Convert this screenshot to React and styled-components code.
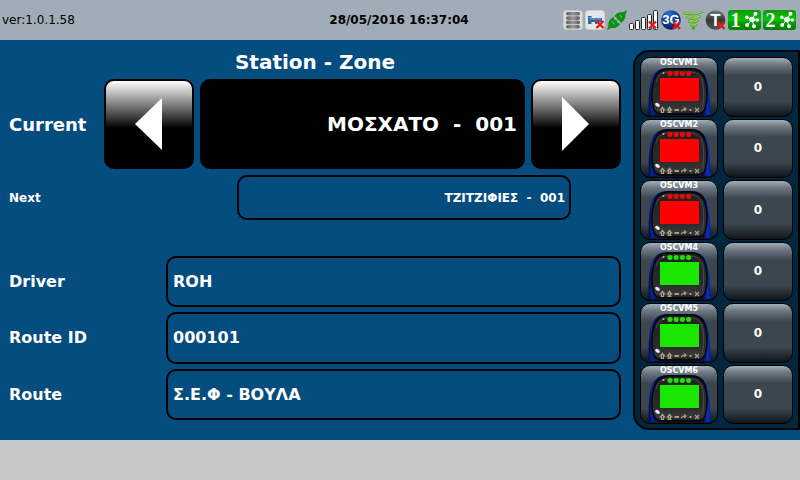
import React from 'react';
import styled, { createGlobalStyle } from 'styled-components';

const GlobalStyle = createGlobalStyle`
  *, *::before, *::after { box-sizing: border-box; }
  body {
    margin: 0;
    background: #c8c8c8;
    font-family: "DejaVu Sans", Verdana, sans-serif;
  }
  button, input { font: inherit; color: inherit; margin: 0; }
`;

const Screen = styled.div`
  display: flex;
  flex-direction: column;
  min-height: 100vh;
`;

const StatusBar = styled.header`
  display: grid;
  grid-template-columns: 1fr auto 1fr;
  align-items: center;
  height: 40px;
  padding: 0 4px 0 2px;
  background: #a0adb9;
  color: #000;
  font-size: 12px;
`;

const Clock = styled.time`
  font-weight: bold;
`;

const Indicators = styled.div`
  display: flex;
  justify-content: flex-end;
  gap: 2px;

  svg { display: block; flex: none; }
`;

const Main = styled.main`
  flex: 1;
  display: flex;
  gap: 12px;
  padding: 10px 0 10px 9px;
  margin-bottom: 40px;
  background: #054c7f;
  color: #fff;
  font-weight: bold;
`;

const TripPanel = styled.section`
  flex: 1;
  min-width: 0;
  display: flex;
  flex-direction: column;
  padding-bottom: 10px;
`;

const Title = styled.h1`
  margin: 0 0 5px;
  font-size: 20px;
  line-height: 24px;
  text-align: center;
`;

const StationRow = styled.div`
  display: grid;
  grid-template-columns: 89px 90px minmax(0, 1fr) 90px;
  gap: 6px;
  align-items: center;
  height: 90px;
`;

const NextRow = styled.div`
  display: grid;
  grid-template-columns: 228px minmax(0, 1fr);
  align-items: center;
  margin: 6px 50px 36px 0;
`;

const FieldGrid = styled.div`
  flex: 1;
  display: grid;
  grid-template-columns: 157px minmax(0, 1fr);
  grid-auto-rows: 1fr;
  row-gap: 5px;
  align-items: center;
`;

const Label = styled.label`
  font-size: ${(p) => p.$size}px;
`;

const Field = styled.input`
  width: 100%;
  min-width: 0;
  height: 100%;
  padding: 0 5px;
  border: 2px solid #000;
  border-radius: 10px;
  background: transparent;
  font-size: 16px;
  outline: none;
`;

const StationField = styled(Field)`
  padding: 0 6px;
  background: #000;
  font-size: 20px;
  text-align: right;
`;

const NextField = styled(Field)`
  height: 45px;
  padding: 0 4px;
  font-size: 12px;
  text-align: right;
`;

const ArrowButton = styled.button`
  display: grid;
  place-items: center;
  height: 90px;
  padding: 0;
  border: 2px solid #000;
  border-radius: 10px;
  background: linear-gradient(#fff 0%, #000 55%);
  cursor: pointer;
`;

const ValidatorPanel = styled.aside`
  display: grid;
  grid-template-columns: 78px 70px;
  grid-auto-rows: 1fr;
  gap: 2px 5px;
  padding: 5px 5px 4px;
  border: 2px solid #000;
  border-radius: 16px 0 0 16px;
  background: #03263f;
`;

const Tile = styled.button`
  position: relative;
  min-height: 0;
  padding: 0;
  overflow: hidden;
  border: 1px solid #000;
  border-radius: 10px;
  background: linear-gradient(#a3aeb7 0%, #6b7680 12%, #3c464e 30%, #3c464e 74%, #0e151b 100%);
  font-size: 12px;
  font-weight: bold;
  cursor: pointer;

  svg { display: block; margin-top: 1px; }
`;

const TileName = styled.span`
  position: absolute;
  top: 0;
  left: 0;
  right: 0;
  font-size: 8px;
  line-height: 10px;
  text-align: center;
`;

const Cross = ({ x, y, size = 8 }) => (
  <path
    d={`M${x} ${y}l${size} ${size}m0 ${-size}l${-size} ${size}`}
    stroke="#e0191c"
    strokeWidth="2.4"
    fill="none"
  />
);

function StorageIcon() {
  return (
    <svg width="20" height="20" viewBox="0 0 20 20" role="img" aria-label="Storage">
      <defs>
        <linearGradient id="bars" x1="0" x2="1">
          <stop offset="0" stopColor="#5c5c5c" />
          <stop offset="0.5" stopColor="#999" />
          <stop offset="1" stopColor="#5c5c5c" />
        </linearGradient>
      </defs>
      <rect x="0.5" y="0.5" width="19" height="19" rx="3" fill="#dcdcdc" stroke="#c9c9c9" />
      <rect x="3" y="2" width="14" height="3.6" rx="1.8" fill="url(#bars)" />
      <rect x="3" y="6.3" width="14" height="3.6" rx="1.8" fill="url(#bars)" />
      <rect x="3" y="10.6" width="14" height="3.6" rx="1.8" fill="url(#bars)" />
      <rect x="3" y="14.9" width="14" height="3.6" rx="1.8" fill="url(#bars)" />
    </svg>
  );
}

function KeyIcon() {
  return (
    <svg width="20" height="20" viewBox="0 0 20 20" role="img" aria-label="Key missing">
      <rect x="0.5" y="0.5" width="19" height="19" rx="3" fill="#e6e6e6" stroke="#cfcfcf" />
      <path d="M3 6h3.500v2H17v4H6.500v2H3z" fill="#2f67a8" />
      <path d="M4 7.500h1.500v1.500H16" stroke="#7ea9d8" fill="none" />
      <path d="M10 12v2h2v-2" fill="#2f67a8" />
      <Cross x={11.5} y={11} size={7} />
    </svg>
  );
}

function PlugIcon() {
  return (
    <svg width="20" height="20" viewBox="0 0 20 20" role="img" aria-label="Connected">
      <g fill="#0b8f12">
        <path d="M20 0l-1.500 4.500c.2 3.500-1.500 6.500-4.500 8.500L7.500 6c2.500-3.200 5.500-4.200 8.500-3.800z" />
        <path d="M0 20l1.500-4.500C1 12 3 9 6.200 7.200l6.800 7c-2.500 3.200-5.500 4.300-9 3.800z" />
      </g>
      <path d="M6.500 6.500l7 7.300" stroke="#a0adb9" strokeWidth="0.8" />
      <path d="M7.500 9.500l1.800-1.800M10.800 12.800l1.800-1.800" stroke="#c5dfc9" strokeWidth="1" />
      <path d="M12.500 5l2.500 2.500M4.800 11.500l3.200 3.200" stroke="#4fbc50" strokeWidth="1.200" />
    </svg>
  );
}

function SignalIcon() {
  return (
    <svg width="30" height="20" viewBox="0 0 30 20" role="img" aria-label="No mobile signal">
      <g fill="#fff" stroke="#222" strokeWidth="1">
        <rect x="0.5" y="13.5" width="4" height="6" rx="1" />
        <rect x="6.5" y="10.5" width="4" height="9" rx="1" />
        <rect x="12.5" y="7.5" width="4" height="12" rx="1" />
        <rect x="18.5" y="4.5" width="4" height="15" rx="1" />
        <rect x="24.5" y="0.5" width="4" height="19" rx="1" />
      </g>
      <Cross x={20} y={11.5} size={7} />
    </svg>
  );
}

function ThreeGIcon() {
  return (
    <svg width="20" height="20" viewBox="0 0 20 20" role="img" aria-label="3G off">
      <defs>
        <radialGradient id="globe" cx="0.4" cy="0.2" r="0.8">
          <stop offset="0" stopColor="#2c6fd0" />
          <stop offset="1" stopColor="#06195a" />
        </radialGradient>
      </defs>
      <circle cx="10" cy="10" r="9.8" fill="url(#globe)" />
      <text x="10" y="14" textAnchor="middle" fontFamily="Liberation Sans, sans-serif" fontWeight="bold" fontSize="13" fill="#fff">3G</text>
      <Cross x={12} y={12} size={7} />
    </svg>
  );
}

function WifiIcon() {
  return (
    <svg width="20" height="20" viewBox="0 0 20 20" role="img" aria-label="Wireless">
      <g fill="none" stroke="#4c9e13" strokeLinecap="round" strokeWidth="2.4">
        <path d="M1.5 3q8.500 3 17-1" />
        <path d="M4 7.500q6 2.400 12.500-.8" />
        <path d="M6 11.500q4.500 1.800 8.500-.5" />
        <path d="M8 15q2.500 1 4.500-.3" />
        <path d="M10 18.300h.8" />
      </g>
      <g fill="none" stroke="#9be052" strokeLinecap="round" strokeWidth="1.2">
        <path d="M1.500 2.700q8.500 3 17-1" />
        <path d="M4 7.200q6 2.400 12.500-.8" />
        <path d="M6 11.200q4.500 1.800 8.500-.5" />
        <path d="M8 14.700q2.500 1 4.500-.3" />
      </g>
    </svg>
  );
}

function TIcon() {
  return (
    <svg width="21" height="20" viewBox="0 0 21 20" role="img" aria-label="T off">
      <defs>
        <linearGradient id="disc" x1="0" y1="0" x2="0" y2="1">
          <stop offset="0" stopColor="#777" />
          <stop offset="0.5" stopColor="#383838" />
          <stop offset="1" stopColor="#555" />
        </linearGradient>
      </defs>
      <circle cx="10.5" cy="10" r="9.8" fill="url(#disc)" />
      <text x="10.5" y="16" textAnchor="middle" fontFamily="Liberation Sans, sans-serif" fontWeight="bold" fontSize="17" fill="#fff">T</text>
      <Cross x={12.5} y={12} size={7} />
    </svg>
  );
}

function NetworkIcon({ number }) {
  return (
    <svg width="33" height="20" viewBox="0 0 33 20" role="img" aria-label={`Network ${number}`}>
      <defs>
        <linearGradient id={`net${number}`} x1="0" y1="0" x2="0" y2="1">
          <stop offset="0" stopColor="#0a9a0a" />
          <stop offset="0.5" stopColor="#05c405" />
          <stop offset="0.6" stopColor="#04a004" />
          <stop offset="1" stopColor="#037d03" />
        </linearGradient>
      </defs>
      <rect width="33" height="20" rx="3" fill={`url(#net${number})`} />
      <text x="7.5" y="16.5" textAnchor="middle" fontFamily="Liberation Serif, serif" fontWeight="bold" fontSize="20" fill="#fff">{number}</text>
      <path d="M24 9.500L27 4M24 9.500l5 .5M24 9.500l2 7M24 9.500l-5-2M24 9.500l-4.500 5.500" stroke="#fff" fill="none" />
      <g fill="#fff">
        <circle cx="24" cy="9.5" r="2.800" />
        <circle cx="27.5" cy="3.8" r="2" />
        <circle cx="29.3" cy="10" r="1.7" />
        <circle cx="26" cy="16.3" r="2" />
        <circle cx="18.800" cy="7.3" r="1.7" />
        <circle cx="19.2" cy="15" r="2" />
      </g>
    </svg>
  );
}

function DeviceDrawing({ color, id }) {
  return (
    <svg width="76" height="55" viewBox="1 2 76 55" aria-hidden="true">
      <defs>
        <linearGradient id={`shell-${id}`} x1="0" x2="1">
          <stop offset="0" stopColor="#020b35" />
          <stop offset="0.05" stopColor="#082399" />
          <stop offset="0.12" stopColor="#04186a" />
          <stop offset="0.88" stopColor="#02104a" />
          <stop offset="0.94" stopColor="#0a30b8" />
          <stop offset="1" stopColor="#06208a" />
        </linearGradient>
        <linearGradient id={`face-${id}`} x1="0" y1="0" x2="0" y2="1">
          <stop offset="0" stopColor="#202020" />
          <stop offset="0.7" stopColor="#2b2b2b" />
          <stop offset="0.9" stopColor="#383838" />
          <stop offset="1" stopColor="#1b1b1b" />
        </linearGradient>
      </defs>
      <path d="M9 57C8 42 9 28 12 20Q16 10 27 10h24Q62 10 66 19c4 9 4 22 5 38z" fill={`url(#shell-${id})`} />
      <path d="M14 51C11 43 11 29 15 20Q19 11 28 11h23Q60 11 64 19c4 9 4 22 1 32q-2 5-8 5H22q-6 0-8-5z" fill={`url(#face-${id})`} stroke="#050505" strokeWidth="1.500" />
      <path d="M16 24q2-10 13-10h21q10 0 12 9" stroke="#484848" fill="none" />
      <path d="M61.500 20q4 12 1 29" stroke="#484848" strokeWidth="1.200" fill="none" />
      <circle cx="23.500" cy="15" r="0.900" fill="#bbb" />
      <g fill={color}>
        <circle cx="30" cy="15.5" r="2.500" />
        <circle cx="36.200" cy="15.5" r="2.500" />
        <circle cx="42.400" cy="15.5" r="2.500" />
        <circle cx="48.600" cy="15.5" r="2.500" />
        <rect x="20" y="20" width="39" height="23" />
      </g>
      <ellipse cx="17.500" cy="46.800" rx="2.600" ry="1.700" transform="rotate(35 17.5 46.8)" fill="#eee" />
      <g fill="none" stroke="#a89f86" strokeWidth="1.200">
        <path d="M22.500 49.300l2 2.500h-1v2.700h-2v-2.700h-1z" />
        <path d="M29.500 49.300l-2 2.500h1v1h2v-1h1zM27.500 54.300h4" />
        <path d="M34.500 52h4.500" strokeWidth="1.800" />
        <path d="M41.500 53.500q0-2.500 4-2.500m-1.500-1.500l2 1.500-2 2" />
        <path d="M49.500 52h2" strokeWidth="2" />
        <path d="M55 50l4 4m0-4l-4 4" />
      </g>
    </svg>
  );
}

const RED = '#ff0000';
const GREEN = '#1ae600';

const validators = [
  { name: 'OSCVM1', color: RED, count: 0 },
  { name: 'OSCVM2', color: RED, count: 0 },
  { name: 'OSCVM3', color: RED, count: 0 },
  { name: 'OSCVM4', color: GREEN, count: 0 },
  { name: 'OSCVM5', color: GREEN, count: 0 },
  { name: 'OSCVM6', color: GREEN, count: 0 },
];

const tripFields = [
  { id: 'driver', label: 'Driver', value: 'ROH' },
  { id: 'route-id', label: 'Route ID', value: '000101' },
  { id: 'route', label: 'Route', value: 'Σ.Ε.Φ - ΒΟΥΛΑ' },
];

export default function App() {
  return (
    <>
      <GlobalStyle />
      <Screen>
        <StatusBar>
          <span>ver:1.0.1.58</span>
          <Clock dateTime="2016-05-28T16:37:04">28/05/2016 16:37:04</Clock>
          <Indicators>
            <StorageIcon />
            <KeyIcon />
            <PlugIcon />
            <SignalIcon />
            <ThreeGIcon />
            <WifiIcon />
            <TIcon />
            <NetworkIcon number={1} />
            <NetworkIcon number={2} />
          </Indicators>
        </StatusBar>
        <Main>
          <TripPanel>
            <Title>Station - Zone</Title>
            <StationRow>
              <Label htmlFor="current" $size={18}>Current</Label>
              <ArrowButton type="button" aria-label="Previous station">
                <svg width="28" height="54" viewBox="0 0 28 54" aria-hidden="true">
                  <path d="M27 1v52L0 27z" fill="#fff" />
                </svg>
              </ArrowButton>
              <StationField id="current" readOnly value="ΜΟΣΧΑΤΟ  -  001" />
              <ArrowButton type="button" aria-label="Next station">
                <svg width="28" height="54" viewBox="0 0 28 54" aria-hidden="true">
                  <path d="M0 0v54l27-27z" fill="#fff" />
                </svg>
              </ArrowButton>
            </StationRow>
            <NextRow>
              <Label htmlFor="next" $size={12}>Next</Label>
              <NextField id="next" readOnly value="ΤΖΙΤΖΙΦΙΕΣ  -  001" />
            </NextRow>
            <FieldGrid>
              {tripFields.map((field) => (
                <React.Fragment key={field.id}>
                  <Label htmlFor={field.id} $size={16}>{field.label}</Label>
                  <Field id={field.id} readOnly value={field.value} />
                </React.Fragment>
              ))}
            </FieldGrid>
          </TripPanel>
          <ValidatorPanel>
            {validators.map((v) => (
              <React.Fragment key={v.name}>
                <Tile type="button">
                  <DeviceDrawing color={v.color} id={v.name} />
                  <TileName>{v.name}</TileName>
                </Tile>
                <Tile type="button" aria-label={`${v.name} count`}>{v.count}</Tile>
              </React.Fragment>
            ))}
          </ValidatorPanel>
        </Main>
      </Screen>
    </>
  );
}
